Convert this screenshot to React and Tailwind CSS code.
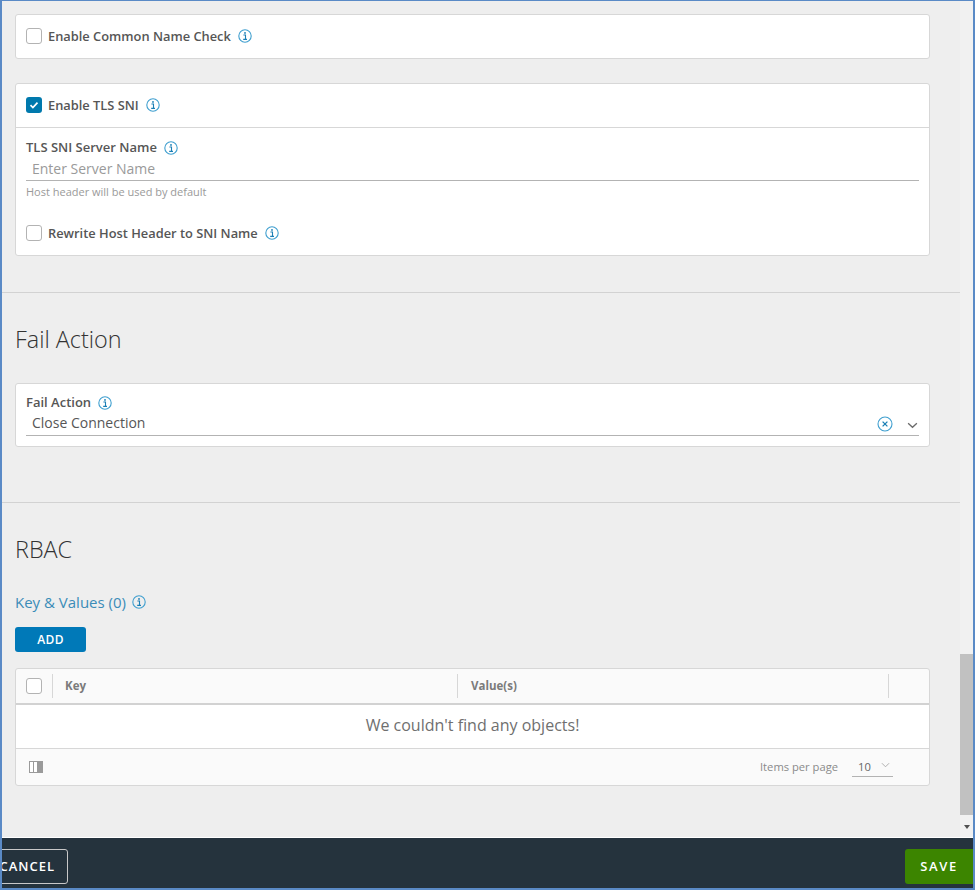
import React from "react";

const FONT = { fontFamily: '"Open Sans", "Noto Sans", sans-serif' };

// Clarity style info icon
function InfoIcon({ className = "" }) {
  return (
    <svg viewBox="0 0 14 14" className={`w-[14px] h-[14px] shrink-0 ${className}`} fill="none">
      <circle cx="7" cy="7" r="6.2" stroke="#3f9fcf" strokeWidth="1.1" />
      <circle cx="7" cy="3.9" r="0.95" fill="#1b7fb5" />
      <path d="M5.4 6h2.1v4.2M5.2 10.4h3.8" stroke="#1b7fb5" strokeWidth="1.1" />
    </svg>
  );
}

function Checkbox({ checked }) {
  if (checked) {
    return (
      <span className="w-4 h-4 rounded-[3px] bg-[#0079ad] flex items-center justify-center shrink-0">
        <svg viewBox="0 0 12 12" className="w-3 h-3" fill="none">
          <path d="M2.5 6.2l2.4 2.3 4.6-4.8" stroke="#fff" strokeWidth="1.7" />
        </svg>
      </span>
    );
  }
  return <span className="w-4 h-4 rounded-[3px] border border-[#b3b3b3] bg-white shrink-0" />;
}

function CheckRow({ label, checked }) {
  return (
    <div className="flex items-center gap-[6px]">
      <Checkbox checked={checked} />
      <span className="text-[12.85px] leading-[18px] font-semibold text-[#565656]">{label}</span>
      <InfoIcon className="ml-[1px]" />
    </div>
  );
}

function Card({ children, className = "" }) {
  return <div className={`bg-white border border-[#d7d7d7] rounded-[3px] ${className}`}>{children}</div>;
}

function SectionTitle({ children, className = "" }) {
  return <h2 className={`text-[23.4px] leading-[28px] font-light text-[#333] ${className}`}>{children}</h2>;
}

export default function App() {
  return (
    <div style={FONT} className="w-[975px] h-[890px] flex flex-col overflow-hidden bg-[#eeeeee] border-2 border-t-[1px] border-[#5a8ac6] border-r-[2px]">
      <div className="flex-1 flex min-h-0">
        <div className="flex-1 min-w-0 overflow-hidden">
          <div className="pl-[13px] pr-[30px] pt-[13px]">
            <Card className="h-[45px] flex items-center pl-[10px] pb-[1px]">
              <CheckRow label="Enable Common Name Check" />
            </Card>

            <Card className="mt-[24px] h-[173px]">
              <div className="h-[44px] flex items-center pl-[10px] pb-[1px] border-b border-[#d7d7d7]">
                <CheckRow label="Enable TLS SNI" checked />
              </div>
              <div className="px-[10px] pt-[12px]">
                <div className="flex items-center gap-[6px] h-[16px]">
                  <span className="text-[13px] font-semibold text-[#565656]">TLS SNI Server Name</span>
                  <InfoIcon className="ml-[1px]" />
                </div>
                <div className="mt-[3px] h-[22px] border-b border-[#b3b3b3] pl-[6px] text-[14px] leading-[20px] text-[#9a9a9a]">
                  Enter Server Name
                </div>
                <p className="mt-[4px] text-[11px] leading-[14px] text-[#9a9a9a]">Host header will be used by default</p>
                <div className="mt-[25px]">
                  <CheckRow label="Rewrite Host Header to SNI Name" />
                </div>
              </div>
            </Card>
          </div>

          <div className="mt-[36px] border-t border-[#d2d2d2] pl-[13px] pr-[30px]">
            <SectionTitle className="mt-[32px]">Fail Action</SectionTitle>
            <Card className="mt-[30px] h-[64px] px-[10px] pt-[11px]">
              <div className="flex items-center gap-[6px] h-[16px]">
                <span className="text-[13px] font-semibold text-[#565656]">Fail Action</span>
                <InfoIcon className="ml-[1px]" />
              </div>
              <div className="mt-[1px] h-[24px] border-b border-[#b3b3b3] pl-[6px] pr-[1px] flex items-center justify-between">
                <span className="text-[14px] leading-[20px] mb-[2px] text-[#565656]">Close Connection</span>
                <div className="flex items-center gap-[14px]">
                  <svg viewBox="0 0 16 16" className="w-4 h-4" fill="none">
                    <circle cx="8" cy="8" r="7" stroke="#3f9fcf" strokeWidth="1.1" />
                    <path d="M5.6 5.6l4.8 4.8M10.4 5.6l-4.8 4.8" stroke="#1b7fb5" strokeWidth="1.3" />
                  </svg>
                  <svg viewBox="0 0 12 8" className="w-[11px] h-[7px] mt-[3px]" fill="none">
                    <path d="M1 1.5l5 4.5 5-4.5" stroke="#6a6a6a" strokeWidth="1.5" />
                  </svg>
                </div>
              </div>
            </Card>
          </div>

          <div className="mt-[55px] border-t border-[#d2d2d2] pl-[13px] pr-[30px]">
            <SectionTitle className="mt-[32px]">RBAC</SectionTitle>
            <div className="mt-[31px] flex items-center gap-[6px] h-[16px]">
              <span className="text-[15px] leading-[20px] text-[#3b8cb8]">Key &amp; Values (0)</span>
              <InfoIcon />
            </div>
            <button className="mt-[17px] block w-[71px] h-[25px] rounded-[3px] bg-[#0079b8] text-white text-[12px] font-semibold tracking-[0.4px]">
              ADD
            </button>

            <div className="mt-[16px] border border-[#d7d7d7] rounded-[3px] bg-[#fafafa]">
              <div className="h-[36px] flex items-center border-b-2 border-[#d2d2d2] text-[11.5px] font-bold text-[#7b7b7b]">
                <div className="w-[37px] flex items-center justify-center border-r border-[#d7d7d7] h-[24px]">
                  <Checkbox />
                </div>
                <div className="w-[405px] pl-[12px] h-[24px] flex items-center border-r border-[#d7d7d7]">Key</div>
                <div className="w-[431px] pl-[13px] h-[24px] flex items-center border-r border-[#d7d7d7]">Value(s)</div>
              </div>
              <div className="h-[44px] bg-white border-b border-[#d7d7d7] pb-[3px] flex items-center justify-center text-[16px] text-[#6f6f6f]">
                We couldn't find any objects!
              </div>
              <div className="h-[36px] flex items-center pl-[13px] pr-[36px] justify-between">
                <svg viewBox="0 0 14 12" className="w-[14px] h-[12px]">
                  <rect x="0.5" y="0.5" width="13" height="11" fill="#fff" stroke="#9a9a9a" />
                  <rect x="4" y="1" width="1" height="10" fill="#9a9a9a" />
                  <rect x="8" y="1" width="5" height="10" fill="#9a9a9a" />
                </svg>
                <div className="flex items-center text-[11.2px] text-[#8a8a8a]">
                  <span>Items per page</span>
                  <div className="ml-[14px] w-[41px] h-[20px] border-b border-[#b3b3b3] pl-[6px] flex items-center gap-[10px] text-[#666]">
                    <span className="mt-[2px]">10</span>
                    <svg viewBox="0 0 10 6" className="w-[9px] h-[6px] mb-[3px]" fill="none">
                      <path d="M1 1l4 4 4-4" stroke="#a8a8a8" strokeWidth="1" />
                    </svg>
                  </div>
                </div>
              </div>
            </div>
          </div>
        </div>

        {/* scrollbar */}
        <div className="w-[13px] shrink-0 bg-[#f1f1f1] flex flex-col items-center">
          <div className="flex-1" />
          <div className="w-full h-[161px] bg-[#c1c1c1]" />
          <div className="h-[22px] flex items-center justify-center">
            <span className="w-0 h-0 border-l-[3px] border-r-[3px] border-t-[4px] border-l-transparent border-r-transparent border-t-[#505050] mt-[2px]" />
          </div>
        </div>
      </div>

      <div className="h-[51px] shrink-0 bg-[#25333d] border-t border-white flex items-start pt-[11px] justify-between overflow-hidden">
        <button className="ml-[-10px] w-[76px] h-[35px] border border-[#c8c8c8] rounded-[3px] text-white text-[13px] font-semibold tracking-[1px] text-right pr-[12px]">
          CANCEL
        </button>
        <button className="w-[68px] h-[35px] rounded-l-[3px] bg-[#3c8500] text-white text-[13px] font-semibold tracking-[1.6px]">
          SAVE
        </button>
      </div>
    </div>
  );
}
